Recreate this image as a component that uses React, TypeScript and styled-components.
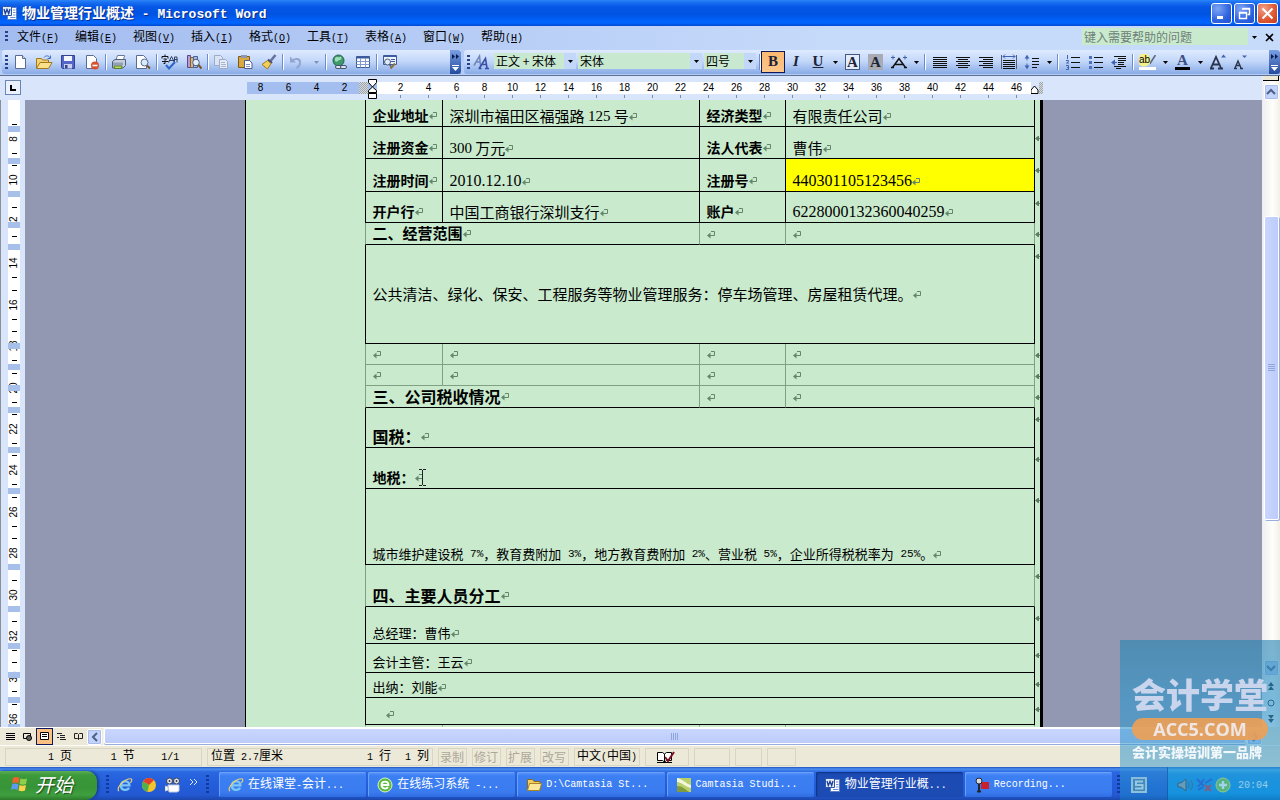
import React from "react";
import styled, { createGlobalStyle, css } from "styled-components";

const GlobalStyle = createGlobalStyle`
  *, *::before, *::after { box-sizing: border-box; }
  html, body { margin: 0; padding: 0; }
  body {
    background: #ece9d8;
    color: #000;
    font-family: "Noto Sans CJK SC", sans-serif;
    font-size: 12px;
    line-height: 16px;
    overflow: hidden;
  }
  button, input, select { font: inherit; color: inherit; margin: 0; padding: 0; border: 0; background: none; border-radius: 0; }
  svg { display: block; flex: none; }
`;

/* ---------- shared ---------- */

const Mono = styled.span<{ $size?: number }>`
  font-family: "Liberation Mono", monospace;
  font-size: ${(p) => p.$size ?? 10}px;
  white-space: pre;
`;

const Serif = styled.span<{ $size?: number }>`
  font-family: "Liberation Serif", serif;
  font-size: ${(p) => p.$size ?? 16}px;
`;

const Shell = styled.div`
  display: flex;
  flex-direction: column;
  height: 100vh;
  overflow: hidden;
`;

/* ---------- title bar ---------- */

const TitleBar = styled.header`
  display: flex;
  align-items: center;
  height: 26px;
  flex: none;
  padding: 0 2px;
  gap: 4px;
  background: linear-gradient(#2f86f8 0, #1a72f2 2px, #0556e4 7px, #0053e2 14px, #0062fb 21px, #0066ff 23px, #0048cf 26px);
  color: #fff;
`;

const TitleText = styled.h1`
  flex: 1;
  margin: 0;
  font-size: 14px;
  line-height: 24px;
  font-weight: 700;
  white-space: pre;
  text-shadow: 1px 1px 0 #0a2c86;
`;

const WindowButtons = styled.div`
  display: flex;
  gap: 2px;
`;

const WindowButton = styled.button<{ $danger?: boolean }>`
  display: grid;
  place-items: center;
  width: 21px;
  height: 21px;
  border: 1px solid #fff;
  border-radius: 3px;
  background: ${(p) =>
    p.$danger
      ? "radial-gradient(circle at 30% 25%, #f0a08a, #e05a35 55%, #c43a1c)"
      : "radial-gradient(circle at 30% 25%, #7ea6f4, #2f63e0 60%, #1e50d0)"};
`;

/* ---------- menu bar ---------- */

const MenuBar = styled.nav`
  display: flex;
  align-items: center;
  height: 24px;
  flex: none;
  padding: 0 2px 2px 5px;
  background: linear-gradient(90deg, #a3bcf0, #c6dafa 65%);
`;

const Grip = styled.span<{ $dark?: boolean; $h?: number }>`
  width: 3px;
  height: ${(p) => p.$h ?? 14}px;
  flex: none;
  background: repeating-linear-gradient(${(p) => (p.$dark ? "#123a9c" : "#27418a")} 0 2px, transparent 2px 4px);
`;

const MenuList = styled.ul`
  display: flex;
  flex: 1;
  list-style: none;
  margin: 0;
  padding: 0 0 0 1px;
`;

const MenuItem = styled.button`
  width: 58px;
  padding: 0 0 0 8px;
  text-align: left;
  line-height: 20px;
  white-space: nowrap;
`;

const HelpBox = styled.input`
  width: 166px;
  height: 17px;
  margin-bottom: 2px;
  padding: 0 2px;
  background: #c9eacc;
  &::placeholder { color: #6f7f7b; opacity: 1; }
`;

const PlainButton = styled.button<{ $w: number }>`
  display: grid;
  place-items: center;
  width: ${(p) => p.$w}px;
  height: 18px;
`;

/* ---------- toolbars ---------- */

const ToolbarRow = styled.div`
  display: flex;
  height: 26px;
  flex: none;
  padding: 0 0 1px 2px;
  gap: 3px;
  background: #b5cdf6;
  border-bottom: 1px solid #5d6f92;
`;

const Toolbar = styled.div<{ $grow?: boolean }>`
  display: flex;
  align-items: center;
  height: 24px;
  padding-left: 3px;
  border-radius: 3px 0 0 3px;
  background: linear-gradient(#dfeafe, #c4d8fa 45%, #88abe6);
  ${(p) => p.$grow && css`flex: 1;`}
`;

const ToolButton = styled.button<{ $w?: number; $active?: boolean }>`
  display: grid;
  place-items: center;
  width: ${(p) => p.$w ?? 24}px;
  height: 22px;
  flex: none;
  ${(p) =>
    p.$active &&
    css`
      border: 1px solid #10185c;
      background: linear-gradient(#fdb970, #fbc78b);
    `}
`;

const Separator = styled.span<{ $wide?: boolean }>`
  width: 1px;
  height: 16px;
  margin: ${(p) => (p.$wide ? "0 3px 0 2px" : "0 1px")};
  flex: none;
  background: #6c8ccb;
  box-shadow: 1px 0 0 #fff;
`;

const Overflow = styled.button`
  display: flex;
  flex-direction: column;
  align-items: center;
  justify-content: space-between;
  width: 11px;
  height: 24px;
  padding: 4px 0 3px;
  flex: none;
  border-radius: 0 3px 3px 0;
  background: linear-gradient(#7a9fe4, #234a9e);
`;

const ToolbarTail = styled.span<{ $w?: number }>`
  flex: ${(p) => (p.$w ? "none" : "1")};
  width: ${(p) => p.$w ?? 0}px;
`;

const Combo = styled.span<{ $w: number }>`
  display: flex;
  align-items: center;
  width: ${(p) => p.$w}px;
  height: 16px;
  margin: 0 2px 2px 0;
  flex: none;
  background: #c9e8d0;
`;

const ComboSelect = styled.select`
  appearance: none;
  flex: 1;
  min-width: 0;
  height: 16px;
  padding: 0 0 0 2px;
  line-height: 16px;
  outline: 0;
`;

const ComboArrow = styled.span`
  display: grid;
  place-items: center;
  width: 12px;
  height: 16px;
  background: #c3d7f8;
`;

/* ---------- workspace ---------- */

const Workspace = styled.div`
  display: flex;
  flex: 1;
  min-height: 0;
`;

const Editor = styled.div`
  display: flex;
  flex-direction: column;
  flex: 1;
  min-width: 0;
`;

const RulerRow = styled.div`
  display: flex;
  height: 24px;
  flex: none;
  background: #d8e5fa;
`;

const RulerCorner = styled.div`
  width: 25px;
  padding: 4px 0 0 5px;
  flex: none;
`;

const TabStop = styled.button`
  display: grid;
  place-items: center;
  width: 16px;
  height: 15px;
  border: 1px solid #6b84b4;
  background: #eaf2ff;
`;

const RulerCenter = styled.div`
  display: flex;
  flex: 1;
  min-width: 0;
  justify-content: center;
`;

const RulerTrack = styled.div`
  display: flex;
  width: 798px;
  flex: none;
  padding: 6px 0 0 2px;
`;

const RulerMargin = styled.div`
  display: flex;
  height: 12px;
  background: #a3beef;
`;

const RulerText = styled.div`
  display: flex;
  height: 12px;
  padding-left: 10px;
  background: #fff;
`;

const RulerMark = styled.span<{ $tick?: boolean }>`
  position: relative;
  width: 28px;
  text-align: center;
  font: 10px/12px "Liberation Sans", sans-serif;
  ${(p) =>
    p.$tick &&
    css`
      &::after { content: ""; position: absolute; left: 13px; top: 13px; width: 1px; height: 3px; background: #7d8ba6; }
    `}
`;

const Handle = styled.span`
  display: flex;
  justify-content: flex-end;
  width: 18px;
  svg { margin-top: -3px; z-index: 1; }
`;

const Dots = styled.span`
  width: 9px;
  height: 12px;
  background: repeating-conic-gradient(#9ea5ad 0 25%, #d6d9dc 0 50%) 0 0 / 2px 2px;
`;

const Body = styled.div`
  display: flex;
  flex: 1;
  min-height: 0;
`;

const SideRuler = styled.div`
  width: 25px;
  flex: none;
  padding: 0 5px 0 7px;
  border-left: 1px solid #8a8f99;
  background: #d8e5fa;
  overflow: hidden;
`;

const SideTrack = styled.div`
  position: relative;
  height: 100%;
  background: #fff;
`;

const SideNumbers = styled.div`
  position: absolute;
  inset: 0 0 auto 0;
  display: flex;
  flex-direction: column;
  justify-content: space-between;
  height: 634px;
  padding-top: 24px;
`;

const SideNumber = styled.span`
  display: flex;
  flex-direction: column;
  align-items: center;
  justify-content: space-between;
  height: 30px;
  width: 12px;
  font: 10px/12px "Liberation Sans", sans-serif;
  &::before, &::after { content: ""; width: 5px; height: 1px; background: #000; }
  b { font-weight: 400; transform: rotate(-90deg); }
`;

const SideRow = styled.div<{ $h: number }>`
  position: relative;
  height: ${(p) => p.$h}px;
  &::after { content: ""; display: block; position: absolute; inset: auto 0 0 0; height: 6px; background: #a6c0ea; }
`;

const SideRows = styled.div`
  padding-top: 5px;
`;

const Canvas = styled.main`
  flex: 1;
  min-width: 0;
  display: flex;
  justify-content: center;
  background: #9298b1;
  overflow: hidden;
`;

const Page = styled.article`
  width: 798px;
  flex: none;
  padding-left: 119px;
  border-left: 1px solid #000;
  border-right: 3px solid #000;
  background: #c9eacc;
`;

const DocTable = styled.table`
  border-collapse: separate;
  border-spacing: 0;
  table-layout: fixed;
  width: 675px;
`;

const Col = styled.col<{ $w: number }>`
  width: ${(p) => p.$w}px;
`;

type Tone = "dark" | "light" | "none";
const tone: Record<Tone, string> = { dark: "#000", light: "#7fa083", none: "transparent" };

const Cell = styled.td<{ $h: number; $side: Tone; $bottom: Tone; $first?: boolean; $mark?: boolean; $middle?: boolean }>`
  height: ${(p) => p.$h}px;
  padding: 0 0 0 7px;
  vertical-align: ${(p) => (p.$middle ? "middle" : "bottom")};
  border-right: 1px solid ${(p) => tone[p.$side]};
  border-bottom: 1px solid ${(p) => tone[p.$bottom]};
  ${(p) => p.$first && css`border-left: 1px solid ${tone[p.$side]};`}
  ${(p) => p.$mark && css`background: #ffff00;`}
  line-height: 0;
  white-space: nowrap;
`;

const EndCell = styled.td`
  padding: 8px 0 0 0;
  vertical-align: top;
  line-height: 0;
`;

const Line = styled.span<{ $size: number; $bold?: boolean; $indent?: boolean }>`
  display: inline-flex;
  align-items: center;
  height: 20px;
  padding-left: ${(p) => (p.$indent ? 13 : 0)}px;
  font-size: ${(p) => p.$size}px;
  line-height: 20px;
  font-weight: ${(p) => (p.$bold ? 700 : 400)};
  white-space: pre;
  padding-bottom: ${(p) => (p.$bold ? 2 : 0)}px;
`;

const Caret = styled.svg`
  margin-left: -6px;
`;

/* ---------- scroll bars ---------- */

const VScroll = styled.aside`
  display: flex;
  flex-direction: column;
  align-items: center;
  width: 18px;
  flex: none;
  background: linear-gradient(90deg, #eeeef0, #fefefb 60%, #f1efe6);
`;

const SplitHandle = styled.span`
  width: 16px;
  height: 5px;
  margin-bottom: 3px;
  flex: none;
  background: #ece9d8;
  border-bottom: 1px solid #000;
  border-right: 1px solid #000;
`;

const ScrollButton = styled.button`
  display: grid;
  place-items: center;
  width: 15px;
  height: 16px;
  flex: none;
  border: 1px solid #fff;
  border-radius: 2px;
  background: #c3d3fc;
  box-shadow: 0 0 0 1px #a9bdea inset;
`;

const VTrack = styled.div`
  display: flex;
  flex-direction: column;
  align-items: center;
  flex: 1;
  min-height: 0;
`;

const VSpace = styled.span<{ $n: number }>`
  flex: ${(p) => p.$n} 1 0;
`;

const VThumb = styled.div`
  display: grid;
  place-items: center;
  flex: 303 1 0;
  width: 15px;
  border: 1px solid #fff;
  border-radius: 2px;
  background: linear-gradient(90deg, #c9d7ff, #bccbf8);
  box-shadow: 1px 1px 0 #98aede;
`;

const Browse = styled.div`
  display: flex;
  flex-direction: column;
  align-items: center;
  justify-content: space-between;
  height: 51px;
  width: 18px;
  padding: 4px 0 2px;
  flex: none;
`;

const BottomFill = styled.span`
  width: 18px;
  height: 18px;
  background: #ece9d8;
  flex: none;
`;

const HScroll = styled.div`
  display: flex;
  align-items: center;
  height: 18px;
  flex: none;
  padding-left: 2px;
  background: #ece9d8;
  border-top: 1px solid #fff;
`;

const ViewButton = styled.button<{ $active?: boolean }>`
  display: grid;
  place-items: center;
  width: 17px;
  height: 17px;
  ${(p) =>
    p.$active &&
    css`
      border: 1px solid #10185c;
      background: #fdc083;
    `}
`;

const HTrack = styled.div`
  display: flex;
  flex: 1;
  height: 17px;
  margin-left: 1px;
  background: #f5f4ef;
`;

const HThumb = styled.div`
  display: grid;
  place-items: center;
  flex: 1;
  height: 16px;
  margin: 0 1px;
  border: 1px solid #fff;
  border-radius: 2px;
  background: linear-gradient(#c9d7ff, #bccbf8);
  box-shadow: 0 1px 0 #98aede;
`;

/* ---------- status bar ---------- */

const StatusBar = styled.footer`
  display: flex;
  align-items: center;
  height: 22px;
  flex: none;
  gap: 5px;
  padding-left: 5px;
  background: #ece9d8;
  border-top: 1px solid #fdfcf7;
`;

const StatusPanel = styled.span<{ $w: number; $muted?: boolean; $pad?: number }>`
  display: flex;
  justify-content: space-between;
  align-items: center;
  width: ${(p) => p.$w}px;
  height: 18px;
  padding: 0 ${(p) => p.$pad ?? 3}px;
  border: 1px solid #d9d5c3;
  color: ${(p) => (p.$muted ? "#aca899" : "#000")};
  white-space: pre;
`;

const StatusCell = styled.span<{ $w?: number; $left?: boolean }>`
  width: ${(p) => (p.$w ? `${p.$w}px` : "auto")};
  text-align: ${(p) => (p.$left ? "left" : "right")};
`;

/* ---------- task bar ---------- */

const TaskBar = styled.div`
  display: flex;
  height: 33px;
  flex: none;
  align-items: stretch;
  background: linear-gradient(#1f52c0 0, #4a8df0 2px, #2a67e0 5px, #245edb 16px, #2359d2 28px, #1c47ae 33px);
  color: #fff;
`;

const StartButton = styled.button`
  display: flex;
  align-items: center;
  gap: 5px;
  width: 97px;
  margin-top: 4px;
  padding: 0 0 4px 10px;
  border-radius: 0 10px 12px 0;
  background: linear-gradient(#5eac56 0, #3c9a3a 4px, #379337 16px, #3f9f3f 24px, #2c7a2c);
  box-shadow: 2px 0 3px #173f93;
  font-size: 19px;
  font-style: italic;
  text-shadow: 1px 1px 1px #1b4a1b;
`;

const QuickLaunch = styled.div`
  display: flex;
  align-items: center;
  gap: 8px;
  width: 122px;
  padding: 4px 0 2px 9px;
  color: #cfe0ff;
`;

const TaskList = styled.div`
  display: flex;
  flex: 1;
  min-width: 0;
  gap: 2px;
  padding: 5px 5px 3px 0;
`;

const Task = styled.button<{ $active?: boolean }>`
  display: flex;
  align-items: center;
  gap: 4px;
  flex: 1 1 0;
  max-width: 148px;
  min-width: 0;
  padding-left: 9px;
  border-radius: 2px;
  white-space: nowrap;
  overflow: hidden;
  background: ${(p) => (p.$active ? "#1c4bb4" : "linear-gradient(#5a96fb 0, #3c7ff2 4px, #3a7cf0 20px, #2f6ce0)")};
  box-shadow: ${(p) => (p.$active ? "inset 1px 1px 2px #0e2f80" : "inset 1px 1px 0 #6aa2fb")};
`;

const TrayLang = styled.div`
  display: flex;
  align-items: center;
  gap: 11px;
  width: 50px;
  padding-top: 2px;
`;

const Tray = styled.div`
  display: flex;
  align-items: center;
  gap: 2px;
  width: 113px;
  padding: 2px 0 0 10px;
  background: linear-gradient(#1c6fd8 0, #3fb0f5 3px, #1590ea 7px, #1291ec 26px, #0d6fc4);
  box-shadow: inset 1px 0 0 #0c3fa0;
  color: #e6f3ff;
`;

const Clock = styled.time`
  margin-left: 5px;
`;

/* ---------- watermark ---------- */

const Watermark = styled.div`
  position: fixed;
  right: 0;
  bottom: 0;
  width: 160px;
  height: 160px;
  padding: 32px 0 0 12px;
  background: linear-gradient(rgba(40, 132, 178, 0.62), rgba(55, 152, 205, 0.66) 40%, rgba(50, 150, 205, 0.5) 80%, rgba(20, 150, 200, 0.35));
  pointer-events: none;
  white-space: nowrap;
`;

const WatermarkName = styled.div`
  height: 46px;
  font-size: 34px;
  line-height: 44px;
  font-weight: 900;
  color: #c9d5ec;
`;

const WatermarkSite = styled.div`
  width: 136px;
  height: 22px;
  border-radius: 11px;
  background: rgba(238, 160, 84, 0.9);
  text-align: center;
  color: #efe6e4;
  font: 700 18px/23px "Open Sans", sans-serif;
`;

const WatermarkSlogan = styled.div`
  margin-top: 3px;
  font-size: 13px;
  line-height: 18px;
  font-weight: 900;
  color: #f2f7fb;
`;

/* ---------- icons ---------- */

const Icon = ({ children, w = 16, h = 16, box }: { children: React.ReactNode; w?: number; h?: number; box?: string }) => (
  <svg width={w} height={h} viewBox={box ?? `0 0 ${w} ${h}`} aria-hidden="true" fill="none">
    {children}
  </svg>
);

const Down = ({ c = "#000" }: { c?: string }) => (
  <Icon w={5} h={3}>
    <path d="M0 0h5L2.500 3z" fill={c} />
  </Icon>
);

const ParaMark = () => (
  <Icon w={9} h={9}>
    <path d="M4 1.500h3.500v4H2" stroke="#64866a" />
    <path d="M0 5.500L3.500 2.500v6z" fill="#64866a" />
  </Icon>
);

const RowMark = () => (
  <Icon w={5} h={7}>
    <path d="M0 3.500L3 1v5z" fill="#5d7a62" />
    <path d="M3.500 1v5M2 3.500h3" stroke="#5d7a62" />
  </Icon>
);

const WordIcon = () => (
  <Icon>
    <path d="M5.500 2.500h9v12h-9z" fill="#fff" stroke="#5b7fc4" />
    <path d="M11 5h2.500M11 7.500h2.500M11 10h2.500M8 12.500h5.500" stroke="#6f8fd0" />
    <path d="M.5 1.500h9v9h-9z" fill="#e4ecfb" stroke="#2c56a8" />
    <path d="M2 4l1.300 4.500L5 4.500l1.700 4L8 4" stroke="#1b3f94" strokeWidth="1.300" />
  </Icon>
);

const Doc = ({ x = 2 }: { x?: number }) => (
  <path d={`M${x}.5 1.500h7l3 3v10h-10z`} fill="#fff" stroke="#5a6b94" />
);

const icons: Record<string, React.ReactNode> = {
  new: (
    <Icon>
      <Doc x={3} />
      <path d="M10.500 1.500v3h3" stroke="#5a6b94" fill="#cddcf5" />
    </Icon>
  ),
  open: (
    <Icon w={18}>
      <path d="M1.500 14V4.500h5l1 1.500h6v3" fill="#f6d273" stroke="#a0781e" />
      <path d="M1.500 14.500L5 8.500h12l-3.500 6z" fill="#fbe08a" stroke="#a0781e" />
      <path d="M9 3.500c2-2.500 5-2 6 .5M15.500 1.500V4.500h-3" stroke="#3f6fc0" />
    </Icon>
  ),
  save: (
    <Icon>
      <path d="M1.500 1.500h13v13h-12l-1-1z" fill="#5566c8" stroke="#33418f" />
      <path d="M4 2h8v5H4z" fill="#f3f5ff" />
      <path d="M4 10h8v4.500H4z" fill="#c9d0ee" />
      <path d="M5 11h2.500v3.500H5z" fill="#33418f" />
    </Icon>
  ),
  perm: (
    <Icon>
      <Doc />
      <circle cx="11" cy="11.500" r="4" fill="#d8502e" />
      <path d="M8.500 11.500h5" stroke="#fff" strokeWidth="1.600" />
    </Icon>
  ),
  print: (
    <Icon>
      <path d="M5 6L6.500 1.500h7L12.500 6" fill="#fff" stroke="#68789c" />
      <path d="M1.500 7.500L4 5.500h10.500v6l-2.500 2.500H1.500z" fill="#c8cfdc" stroke="#4e5f80" />
      <path d="M2 8.500h10v3H2z" fill="#8fa0b8" />
      <path d="M3 12h8l-.5 2.500h-7z" fill="#b6e05a" stroke="#5c7b2c" />
    </Icon>
  ),
  preview: (
    <Icon>
      <Doc x={1} />
      <circle cx="9.500" cy="8.500" r="3.500" fill="#d6ecfb" stroke="#5a6b94" />
      <path d="M12 11.500l3 3" stroke="#7a5222" strokeWidth="2" />
    </Icon>
  ),
  spell: (
    <Icon w={18}>
      <path d="M1 2.500h6M1 2.500v2M7 2.500v2M4 .5v2M2.500 5h3L4 6.500v3H2.500M1 7.500h6.500" stroke="#111" />
      <path d="M7.500 8.500L10.500 2.500l3 6M8.500 6.500h4M13.500 8.500V3h2.500v5.500M13.500 5.500h3" stroke="#2c3f66" />
      <path d="M5 11l3 3.500L14 8" stroke="#2f63c8" strokeWidth="2" />
    </Icon>
  ),
  research: (
    <Icon>
      <path d="M1.500 1.500h3v12h-3z" fill="#b99bd0" stroke="#5b4a86" />
      <path d="M4.500 3.500h3v10h-3z" fill="#d9b780" stroke="#7d6236" />
      <path d="M7.500 2.500h4v11h-4z" fill="#a8bfe8" stroke="#4a5f96" />
      <circle cx="10" cy="8.500" r="3.300" fill="#e2f0fb" stroke="#4d5c7d" />
      <path d="M12.500 11l3 3.500" stroke="#7a5222" strokeWidth="2" />
    </Icon>
  ),
  copy: (
    <Icon>
      <path d="M1.500 1.500h6l2 2v8h-8z" fill="#dbe4f4" stroke="#9fabc6" />
      <path d="M6.500 5.500h6l2 2v7h-8z" fill="#e6ecf7" stroke="#9fabc6" />
      <path d="M8 8.500h4M8 10.500h5M8 12.500h5" stroke="#a9b5cf" />
    </Icon>
  ),
  paste: (
    <Icon>
      <path d="M1.500 2.500h11v11h-11z" fill="#d9a840" stroke="#7d5a16" />
      <path d="M4 1h6v3H4z" fill="#8d97b0" />
      <path d="M7.500 6.500h5l2.500 2.500v5.500H7.500z" fill="#fff" stroke="#4b5d8c" />
      <path d="M9 10.500h4M9 12.500h4" stroke="#7f93c4" />
    </Icon>
  ),
  brush: (
    <Icon>
      <path d="M14.500 1L9.500 7" stroke="#6672a0" strokeWidth="2.600" />
      <path d="M7 5.500l4 3.500" stroke="#434c70" strokeWidth="2" />
      <path d="M1 10.500l5.500-4L10 9.500 6.500 15z" fill="#f2cf58" stroke="#a07c22" />
    </Icon>
  ),
  undo: (
    <Icon>
      <path d="M3 7.500c4-4 9.500-3 9 1.500 0 2-1.500 4-3.500 5" stroke="#93a6cf" strokeWidth="2" />
      <path d="M2 2.500v6h6z" fill="#93a6cf" />
    </Icon>
  ),
  link: (
    <Icon>
      <circle cx="7.500" cy="6.500" r="5.500" fill="#3f9a6a" stroke="#1f5f50" />
      <path d="M4 4c2-2 3 0 5-1s2 3 0 3-3 3-5 1z" fill="#9fdcb8" />
      <rect x="4.500" y="11.500" width="6" height="3" rx="1.500" stroke="#45516e" fill="#dfe6f3" />
      <rect x="9.500" y="11.500" width="6" height="3" rx="1.500" stroke="#45516e" fill="#dfe6f3" />
    </Icon>
  ),
  table: (
    <Icon>
      <path d="M1.500 2.500h13v11h-13z" fill="#fff" stroke="#3c5a9c" />
      <path d="M1.500 3.500h13" stroke="#3c5a9c" strokeWidth="2" />
      <path d="M1.500 7.500h13M1.500 10.500h13M5.500 4v9.500M10.500 4v9.500" stroke="#7f9bd0" />
    </Icon>
  ),
  read: (
    <Icon>
      <path d="M1.500 1.500h13v9h-13z" fill="#eef4fd" stroke="#3c5a9c" />
      <path d="M1.500 2.500h13" stroke="#3c5a9c" />
      <path d="M9 5.500h4M9 7.500h4" stroke="#3c5a9c" />
      <path d="M8.500 14.500l4.500-5" stroke="#8a7440" strokeWidth="2" />
      <circle cx="5.500" cy="8" r="3" fill="#dcecfb" stroke="#4d5c7d" />
      <path d="M7.500 10.500l1.500 2" stroke="#4d5c7d" strokeWidth="1.400" />
    </Icon>
  ),
  styles: (
    <Icon w={18}>
      <path d="M1 11.500L6.500 2l1 9.500M3.500 8h4" stroke="#6f86b8" strokeWidth="1.500" />
      <path d="M6.500 14L12.500 4.500l1.500 9.500M9 10.500h5M5.500 14.500h3M12 14.500h4" stroke="#3a4ea8" strokeWidth="1.600" />
    </Icon>
  ),
  scale: (
    <Icon w={18}>
      <path d="M1 3.500h4M13 3.500h4M3 1.500v4M15 1.500v4" stroke="#3f63b0" />
      <path d="M2.500 13.500L9 4.500l6.500 9M5 10.500h8M1 13.500h3M14 13.500h3" stroke="#111" strokeWidth="1.500" />
    </Icon>
  ),
  justify: (
    <Icon>
      <path d="M1 3.500h14M1 5.500h14M1 7.500h14M1 9.500h14M1 11.500h14M1 13.500h14" stroke="#111" shapeRendering="crispEdges" />
    </Icon>
  ),
  center: (
    <Icon>
      <path d="M1 3.500h14M3 5.500h10M1 7.500h14M3 9.500h10M1 11.500h14M3 13.500h10" stroke="#111" shapeRendering="crispEdges" />
    </Icon>
  ),
  right: (
    <Icon>
      <path d="M1 3.500h14M5 5.500h10M1 7.500h14M5 9.500h10M1 11.500h14M5 13.500h10" stroke="#111" shapeRendering="crispEdges" />
    </Icon>
  ),
  spread: (
    <Icon>
      <path d="M.5 1v14M15.500 1v14" stroke="#555f78" />
      <path d="M2 2.500h12M4 .5l-2 2 2 2M12 .5l2 2-2 2" stroke="#3f63b0" />
      <path d="M2 6.500h12M2 8.500h12M2 10.500h12M2 12.500h12M2 14.500h12" stroke="#111" shapeRendering="crispEdges" />
    </Icon>
  ),
  spacing: (
    <Icon>
      <path d="M3 1.500v13" stroke="#3f63b0" strokeDasharray="5 3" />
      <path d="M.5 4.500L3 1l2.500 3.500zM.5 11.500L3 15l2.500-3.500z" fill="#3f63b0" />
      <path d="M8 4.500h7M8 7.500h7M8 10.500h7M8 13.500h5" stroke="#111" shapeRendering="crispEdges" />
    </Icon>
  ),
  numbers: (
    <Icon>
      <path d="M2.500 1v4M1 6.500h2.500v1L1.500 9h2.500M1 11.500h2.500v4H1M2 13.500h1" stroke="#3f63b0" />
      <path d="M6 3.500h9M6 8.500h9M6 13.500h9" stroke="#111" shapeRendering="crispEdges" />
    </Icon>
  ),
  bullets: (
    <Icon>
      <path d="M1 2h3v3H1zM1 7h3v3H1zM1 12h3v3H1z" fill="#4f70bc" />
      <path d="M6 3.500h9M6 8.500h9M6 13.500h9" stroke="#111" shapeRendering="crispEdges" />
    </Icon>
  ),
  indent: (
    <Icon>
      <path d="M0 8.500L4 5.500v6z" fill="#3f63b0" />
      <path d="M3 8.500h3" stroke="#3f63b0" />
      <path d="M3 2.500h12M7 4.500h8M7 6.500h8M7 8.500h6M7 10.500h6M3 12.500h12M5 14.500h5" stroke="#111" shapeRendering="crispEdges" />
    </Icon>
  ),
};

const LetterIcon = styled.span<{ $box?: "frame" | "shade"; $italic?: boolean; $underline?: boolean; $bar?: string }>`
  display: block;
  min-width: 15px;
  height: 16px;
  padding: 0 1px;
  text-align: center;
  font: 700 15px/15px "Liberation Serif", serif;
  color: #1c2436;
  ${(p) => p.$box === "frame" && css`border: 1px solid #45567f; background: #e3ecfc; line-height: 14px;`}
  ${(p) => p.$box === "shade" && css`background: #a9abb4; line-height: 16px;`}
  ${(p) => p.$italic && css`font-style: italic;`}
  ${(p) => p.$underline && css`text-decoration: underline;`}
  ${(p) => p.$bar && css`border-bottom: 3px solid ${p.$bar}; line-height: 13px; color: #3b4f86;`}
`;

const HighlightGlyph = styled.span`
  display: flex;
  align-items: center;
  width: 17px;
  height: 16px;
  padding-bottom: 2px;
  border-bottom: 3px solid #fff;
  font: 10px/12px "Liberation Sans", sans-serif;
  background: radial-gradient(circle at 5px 6px, #f4f08a 0 6px, transparent 7px);
`;

const IeIcon = () => (
  <Icon box="0 0 18 18">
    <path d="M4.500 9.500h9.500c0-6-9.500-6.500-9.500.5 0 5.500 7.500 5.500 9 2" stroke="#7cc6f8" strokeWidth="2.600" />
    <path d="M2 16C-1 12 8 2 15.500 2c2 0 1 3-.5 4.500" stroke="#e8d070" strokeWidth="1.300" />
  </Icon>
);
const GreenE = () => (
  <Icon>
    <circle cx="8" cy="8" r="7" fill="#5cbb3c" stroke="#d9f2cc" />
    <path d="M4.500 8h7c0-4.500-7-4.500-7 0 0 4 5 4.500 6.500 2" stroke="#fff" strokeWidth="1.800" />
  </Icon>
);
const FolderIcon = () => (
  <Icon>
    <path d="M1.500 13.500v-11h5l1.500 2h6v9z" fill="#f3cd62" stroke="#8a6a1c" />
    <path d="M1.500 13.500L3.500 6.500h12l-2 7z" fill="#fce79a" stroke="#a88428" />
  </Icon>
);
const CamIcon = () => (
  <Icon>
    <path d="M1 1h14v14H1z" fill="#b9cf6a" />
    <path d="M1 1c6 1 9 6 14 7v3C8 9 5 5 1 5z" fill="#f4f7df" />
    <path d="M1 9c5 0 8 3 12 6H1z" fill="#7f9a3c" />
  </Icon>
);
const RecIcon = () => (
  <Icon>
    <path d="M7 5h8v7H7z" fill="#c8202c" />
    <circle cx="5" cy="4" r="3" fill="#d8dbe2" stroke="#22262e" />
    <path d="M5 7v7M3 14.500h4" stroke="#22262e" strokeWidth="2" />
  </Icon>
);

/* ---------- data ---------- */

const menus: [string, string][] = [
  ["文件", "F"], ["编辑", "E"], ["视图", "V"], ["插入", "I"], ["格式", "O"],
  ["工具", "T"], ["表格", "A"], ["窗口", "W"], ["帮助", "H"],
];

const rowHeights = [27, 32, 33, 31, 22, 99, 21, 21, 22, 40, 41, 76, 42, 37, 29, 25, 27];
const sideNumbers = Array.from({ length: 15 }, (_, i) => 8 + i * 2);
const rulerNumbers = Array.from({ length: 23 }, (_, i) => 2 + i * 2);

const details: { h: number; label: string; value: React.ReactNode; label2: string; value2: React.ReactNode; mark?: boolean }[] = [
  { h: 27, label: "企业地址", value: <>深圳市福田区福强路 <Serif $size={15}>125</Serif> 号</>, label2: "经济类型", value2: "有限责任公司" },
  { h: 32, label: "注册资金", value: <><Serif $size={15}>300</Serif> 万元</>, label2: "法人代表", value2: "曹伟" },
  { h: 33, label: "注册时间", value: <Serif>2010.12.10</Serif>, label2: "注册号", value2: <Serif>440301105123456</Serif>, mark: true },
  { h: 31, label: "开户行", value: "中国工商银行深圳支行", label2: "账户", value2: <Serif>6228000132360040259</Serif> },
];

/* ---------- document ---------- */

const End = ({ show = true }: { show?: boolean }) => <EndCell>{show && <RowMark />}</EndCell>;

const Empty = () => (
  <Line $size={13}>
    <ParaMark />
  </Line>
);

type WideProps = { h: number; size: number; bold?: boolean; middle?: boolean; side?: Tone; indent?: boolean; children?: React.ReactNode };
const WideRow = ({ h, size, bold, middle, side = "dark", indent, children }: WideProps) => (
  <tr>
    <Cell colSpan={4} $h={h} $side={side} $bottom="dark" $first $middle={middle}>
      <Line $size={size} $bold={bold} $indent={indent}>
        {children}
        <ParaMark />
      </Line>
    </Cell>
    <End />
  </tr>
);

const HeadingRow = ({ size, children }: { size: number; children: string }) => (
  <tr>
    <Cell colSpan={2} $h={22} $side="light" $bottom="dark" $first>
      <Line $size={size} $bold>
        {children}
        <ParaMark />
      </Line>
    </Cell>
    <Cell $h={22} $side="light" $bottom="dark"><Empty /></Cell>
    <Cell $h={22} $side="light" $bottom="dark"><Empty /></Cell>
    <End />
  </tr>
);

const BlankRow = () => (
  <tr>
    {[0, 1, 2, 3].map((i) => (
      <Cell key={i} $h={21} $side="light" $bottom="light" $first={i === 0}>
        <Empty />
      </Cell>
    ))}
    <End />
  </tr>
);

const Document = () => (
  <DocTable>
    <colgroup>
      {[78, 257, 86, 249, 5].map((w) => <Col key={w} $w={w} />)}
    </colgroup>
    <tbody>
      {details.map((d, i) => (
        <tr key={d.label}>
          <Cell $h={d.h} $side="dark" $bottom="dark" $first>
            <Line $size={14} $bold>{d.label}<ParaMark /></Line>
          </Cell>
          <Cell $h={d.h} $side="dark" $bottom="dark">
            <Line $size={15}>{d.value}<ParaMark /></Line>
          </Cell>
          <Cell $h={d.h} $side="dark" $bottom="dark">
            <Line $size={14} $bold>{d.label2}<ParaMark /></Line>
          </Cell>
          <Cell $h={d.h} $side="dark" $bottom="dark" $mark={d.mark}>
            <Line $size={15}>{d.value2}<ParaMark /></Line>
          </Cell>
          <End show={i > 0} />
        </tr>
      ))}
      <HeadingRow size={15}>二、经营范围</HeadingRow>
      <WideRow h={99} size={15} middle>公共清洁、绿化、保安、工程服务等物业管理服务：停车场管理、房屋租赁代理。</WideRow>
      <BlankRow />
      <BlankRow />
      <HeadingRow size={16}>三、公司税收情况</HeadingRow>
      <WideRow h={40} size={16} bold>国税：</WideRow>
      <tr>
        <Cell colSpan={4} $h={41} $side="dark" $bottom="dark" $first>
          <Line $size={14} $bold>
            地税：
            <ParaMark />
            <Caret width="9" height="17" viewBox="0 0 9 17" aria-hidden="true" fill="none">
              <path d="M1 .5h3M5 .5h3M4.500 1v15M1 16.500h3M5 16.500h3" stroke="#222" />
            </Caret>
          </Line>
        </Cell>
        <End />
      </tr>
      <WideRow h={76} size={13}>
        城市维护建设税<Mono $size={11}> 7%</Mono>，教育费附加<Mono $size={11}> 3%</Mono>，地方教育费附加<Mono $size={11}> 2%</Mono>、营业税<Mono $size={11}> 5%</Mono>，企业所得税税率为<Mono $size={11}> 25%</Mono>。
      </WideRow>
      <WideRow h={42} size={16} bold side="light">四、主要人员分工</WideRow>
      <WideRow h={37} size={13}>总经理：曹伟</WideRow>
      <WideRow h={29} size={13}>会计主管：王云</WideRow>
      <WideRow h={25} size={13}>出纳：刘能</WideRow>
      <WideRow h={27} size={13} indent />
      <tr>
        {[0, 1, 2, 3].map((i) => (
          <Cell key={i} $h={2} $side="light" $bottom="none" $first={i === 0} />
        ))}
      </tr>
    </tbody>
  </DocTable>
);

/* ---------- bars ---------- */

const Tool = ({ n, w, label }: { n: string; w?: number; label: string }) => (
  <ToolButton $w={w} aria-label={label}>{icons[n]}</ToolButton>
);

const DropButton = ({ w = 12, c }: { w?: number; c?: string }) => (
  <ToolButton $w={w} aria-label="更多选项"><Down c={c} /></ToolButton>
);

const OverflowButton = () => (
  <Overflow aria-label="工具栏选项">
    <Icon w={8} h={5}>
      <path d="M0 0v5l3-2.500zM4 0v5l3-2.500z" fill="#0a1c4c" />
    </Icon>
    <Icon w={7} h={6}>
      <path d="M0 .5h7" stroke="#fff" />
      <path d="M0 2h7L3.500 6z" fill="#fff" />
    </Icon>
  </Overflow>
);

const ComboBox = ({ w, value, label }: { w: number; value: string; label: string }) => (
  <Combo $w={w}>
    <ComboSelect aria-label={label} defaultValue={value}>
      <option>{value}</option>
    </ComboSelect>
    <ComboArrow><Down /></ComboArrow>
  </Combo>
);

const Chevron = ({ d }: { d: string }) => (
  <Icon w={10} h={10}>
    <path d={d} stroke="#4d6185" strokeWidth="2" />
  </Icon>
);

export default function App() {
  return (
    <Shell>
      <GlobalStyle />
      <TitleBar>
        <WordIcon />
        <TitleText>物业管理行业概述<Mono $size={13}> - Microsoft Word</Mono></TitleText>
        <WindowButtons>
          <WindowButton aria-label="最小化">
            <Icon w={13} h={13}><path d="M2 9h6v3H2z" fill="#fff" /></Icon>
          </WindowButton>
          <WindowButton aria-label="还原">
            <Icon w={13} h={13}>
              <path d="M4.500 1.500h7v6h-2M4 2h8" stroke="#fff" strokeWidth="1.400" />
              <path d="M1.500 5.500h7v6h-7zM1 6h8" stroke="#fff" strokeWidth="1.400" />
            </Icon>
          </WindowButton>
          <WindowButton $danger aria-label="关闭">
            <Icon w={13} h={13}><path d="M1.500 1.500l10 10M11.500 1.500l-10 10" stroke="#fff" strokeWidth="2" /></Icon>
          </WindowButton>
        </WindowButtons>
      </TitleBar>

      <MenuBar>
        <Grip $h={12} />
        <MenuList>
          {menus.map(([name, key]) => (
            <li key={key}>
              <MenuItem>{name}<Mono>(<u>{key}</u>)</Mono></MenuItem>
            </li>
          ))}
        </MenuList>
        <HelpBox aria-label="帮助" placeholder="键入需要帮助的问题" />
        <PlainButton $w={12} aria-label="展开帮助"><Down /></PlainButton>
        <PlainButton $w={18} aria-label="关闭文档">
          <Icon w={9} h={9}><path d="M1 1l7 7M8 1L1 8" stroke="#000" strokeWidth="1.600" /></Icon>
        </PlainButton>
      </MenuBar>

      <ToolbarRow>
        <Toolbar>
          <Grip />
          <Tool n="new" label="新建" />
          <Tool n="open" label="打开" />
          <Tool n="save" label="保存" />
          <Tool n="perm" label="权限" />
          <Separator />
          <Tool n="print" label="打印" />
          <Tool n="preview" label="打印预览" />
          <Separator />
          <Tool n="spell" label="拼写和语法" />
          <Tool n="research" label="信息检索" />
          <Separator />
          <Tool n="copy" label="复制" />
          <Tool n="paste" label="粘贴" />
          <Tool n="brush" label="格式刷" />
          <Separator />
          <Tool n="undo" label="撤消" />
          <DropButton w={16} c="#7f93bd" />
          <Separator />
          <Tool n="link" label="超链接" />
          <Tool n="table" label="插入表格" />
          <Separator />
          <Tool n="read" label="阅读" />
          <ToolbarTail $w={48} />
          <OverflowButton />
        </Toolbar>
        <Toolbar $grow>
          <Grip />
          <Tool n="styles" label="格式窗格" />
          <ComboBox w={82} value="正文 + 宋体" label="样式" />
          <ComboBox w={124} value="宋体" label="字体" />
          <ComboBox w={52} value="四号" label="字号" />
          <Separator />
          <ToolButton $w={24} $active aria-label="加粗"><LetterIcon>B</LetterIcon></ToolButton>
          <ToolButton $w={22} aria-label="倾斜"><LetterIcon $italic>I</LetterIcon></ToolButton>
          <ToolButton $w={22} aria-label="下划线"><LetterIcon $underline>U</LetterIcon></ToolButton>
          <DropButton />
          <ToolButton $w={23} aria-label="字符边框"><LetterIcon $box="frame">A</LetterIcon></ToolButton>
          <ToolButton $w={23} aria-label="字符底纹"><LetterIcon $box="shade">A</LetterIcon></ToolButton>
          <Tool n="scale" w={23} label="字符缩放" />
          <DropButton />
          <Separator $wide />
          <Tool n="justify" w={23} label="两端对齐" />
          <Tool n="center" w={23} label="居中" />
          <Tool n="right" w={23} label="右对齐" />
          <Tool n="spread" w={23} label="分散对齐" />
          <Tool n="spacing" w={23} label="行距" />
          <DropButton />
          <Separator $wide />
          <Tool n="numbers" w={23} label="编号" />
          <Tool n="bullets" w={23} label="项目符号" />
          <Tool n="indent" w={23} label="减少缩进量" />
          <Separator $wide />
          <ToolButton $w={23} aria-label="突出显示">
            <HighlightGlyph>
              ab
              <Icon w={6} h={10}><path d="M5.500 0L1 7l-1 2" stroke="#5f6b80" strokeWidth="1.600" /></Icon>
            </HighlightGlyph>
          </ToolButton>
          <DropButton />
          <ToolButton $w={23} aria-label="字体颜色"><LetterIcon $bar="#000">A</LetterIcon></ToolButton>
          <DropButton />
          <ToolButton $w={23} aria-label="增大字体">
            <Icon><path d="M1 14L6 3l5 11M3 10.500h6M0 14.500h4M8 14.500h5" stroke="#2a344e" strokeWidth="1.800" /><path d="M11 3.500L13.500.500 16 3.500z" fill="#3f63b0" /></Icon>
          </ToolButton>
          <ToolButton $w={23} aria-label="缩小字体">
            <Icon><path d="M2 14l3-7 3 7M3.500 11.500h3M1 14.500h3M7 14.500h3" stroke="#2a344e" strokeWidth="1.400" /><path d="M9 1.500h5L11.500 4z" fill="#3f63b0" /></Icon>
          </ToolButton>
          <ToolbarTail />
          <OverflowButton />
        </Toolbar>
      </ToolbarRow>

      <Workspace>
        <Editor>
          <RulerRow>
            <RulerCorner>
              <TabStop aria-label="制表符">
                <Icon w={8} h={8}><path d="M2 1v5h5" stroke="#000" strokeWidth="2" /></Icon>
              </TabStop>
            </RulerCorner>
            <RulerCenter>
              <RulerTrack>
                <RulerMargin>
                  {[8, 6, 4, 2].map((n) => <RulerMark key={n}>{n}</RulerMark>)}
                  <Handle>
                    <Dots />
                    <Icon w={9} h={21}>
                      <path d="M.5.500h8v3l-4 4.500-4-4.500zM.5 13.500v-2L4.500 8l4 3.500v2zM.5 14.500h8v5h-8z" fill="#fff" stroke="#000" />
                    </Icon>
                  </Handle>
                </RulerMargin>
                <RulerText>
                  {rulerNumbers.map((n) => <RulerMark key={n} $tick>{n}</RulerMark>)}
                </RulerText>
                <Icon w={8} h={14}>
                  <path d="M0 8l3.500-4L7 8v3.500H0z" fill="#fff" stroke="#000" />
                </Icon>
                <Dots />
              </RulerTrack>
            </RulerCenter>
          </RulerRow>
          <Body>
            <SideRuler>
              <SideTrack>
                <SideNumbers>
                  {sideNumbers.map((n) => <SideNumber key={n}><b>{n}</b></SideNumber>)}
                </SideNumbers>
                <SideRows>
                  {rowHeights.map((h, i) => <SideRow key={i} $h={h} />)}
                </SideRows>
              </SideTrack>
            </SideRuler>
            <Canvas>
              <Page>
                <Document />
              </Page>
            </Canvas>
          </Body>
          <HScroll>
            <ViewButton aria-label="普通视图">
              <Icon w={9} h={9}><path d="M0 1.500h9M0 3.500h9M0 5.500h9M0 7.500h9" stroke="#000" shapeRendering="crispEdges" /></Icon>
            </ViewButton>
            <ViewButton aria-label="Web 版式视图">
              <Icon w={9} h={9}><path d="M.5 1.500h7v5h-7z" stroke="#000" /><circle cx="6" cy="6" r="2.500" fill="#666" stroke="#000" /></Icon>
            </ViewButton>
            <ViewButton $active aria-label="页面视图">
              <Icon w={9} h={9}><path d="M.5.500h8v7h-8z" fill="#fff" stroke="#000" /><path d="M2 2.500h5M2 4.500h5" stroke="#000" /></Icon>
            </ViewButton>
            <ViewButton aria-label="大纲视图">
              <Icon w={9} h={9}><path d="M0 1.500h5M3 3.500h5M0 5.500h2M3 5.500h5M3 7.500h6" stroke="#222" /></Icon>
            </ViewButton>
            <ViewButton aria-label="阅读版式">
              <Icon w={9} h={9}><path d="M.5 1.500h3l1 1 1-1h3v5h-3l-1 1-1-1h-3zM4.500 2.500v5" stroke="#222" /></Icon>
            </ViewButton>
            <ScrollButton aria-label="向左滚动"><Chevron d="M7 1L3 5l4 4" /></ScrollButton>
            <HTrack>
              <HThumb>
                <Icon w={8} h={7}><path d="M.5 0v7M2.500 0v7M4.500 0v7M6.500 0v7" stroke="#8fa5dc" /></Icon>
              </HThumb>
            </HTrack>
            <ScrollButton aria-label="向右滚动"><Chevron d="M3 1l4 4-4 4" /></ScrollButton>
          </HScroll>
        </Editor>
        <VScroll>
          <SplitHandle />
          <ScrollButton aria-label="向上滚动"><Chevron d="M1 7l4-4 4 4" /></ScrollButton>
          <VTrack>
            <VSpace $n={117} />
            <VThumb>
              <Icon w={7} h={8}><path d="M0 .5h7M0 2.500h7M0 4.500h7M0 6.500h7" stroke="#8fa5dc" /></Icon>
            </VThumb>
            <VSpace $n={141} />
          </VTrack>
          <ScrollButton aria-label="向下滚动"><Chevron d="M1 3l4 4 4-4" /></ScrollButton>
          <Browse>
            <Icon w={8} h={12}><path d="M1 6l3-4 3 4zM1 10l3-4 3 4z" fill="#111" /></Icon>
            <Icon w={8} h={8}><circle cx="4" cy="4" r="3" stroke="#111" /></Icon>
            <Icon w={8} h={12}><path d="M1 2l3 4 3-4zM1 6l3 4 3-4z" fill="#111" /></Icon>
          </Browse>
          <BottomFill />
        </VScroll>
      </Workspace>

      <StatusBar>
        <StatusPanel $w={197}>
          <StatusCell $w={63}><Mono>1 </Mono>页</StatusCell>
          <StatusCell $w={62}><Mono>1 </Mono>节</StatusCell>
          <StatusCell $w={44}><Mono>1/1</Mono></StatusCell>
          <StatusCell $w={18} />
        </StatusPanel>
        <StatusPanel $w={226}>
          <StatusCell $w={142} $left>位置<Mono> 2.7</Mono>厘米</StatusCell>
          <StatusCell><Mono>1 </Mono>行</StatusCell>
          <StatusCell><Mono>1 </Mono>列</StatusCell>
        </StatusPanel>
        {["录制", "修订", "扩展", "改写"].map((t) => (
          <StatusPanel key={t} $w={29} $muted $pad={1}>{t}</StatusPanel>
        ))}
        <StatusPanel $w={66} $pad={2}><span>中文<Mono>(</Mono>中国<Mono>)</Mono></span></StatusPanel>
        <StatusPanel $w={44} $pad={10}>
          <Icon w={19} h={14}>
            <path d="M1.500 2.500h5l2 1.500 2-1.500h5v8h-5l-2 1.500-2-1.500h-5zM8.500 4v8" fill="#fff" stroke="#000" />
            <path d="M1 12.500h15" stroke="#000" />
            <path d="M9 7l3 4 6-9" stroke="#7c1020" strokeWidth="2" />
          </Icon>
        </StatusPanel>
        <StatusPanel $w={36} />
        <StatusPanel $w={27} />
        <StatusPanel $w={29} />
      </StatusBar>

      <TaskBar>
        <StartButton>
          <Icon w={20} h={20}>
            <path d="M3 4c2-1.500 4-1.500 6.500 0L8.500 9.500C6 8 4 8 2 9.500z" fill="#f0622c" />
            <path d="M10.500 4.500c2.500 1 4 1 6.500 0L16 10c-2 1-4 1-6.500 0z" fill="#8fd04a" />
            <path d="M2 10.500c2-1.500 4-1.500 6.500 0L7.500 16C5 14.500 3 14.500 1 16z" fill="#5a9cf4" />
            <path d="M9.500 11c2.500 1 4 1 6.500 0l-1 5.500c-2 1-4 1-6.500 0z" fill="#fbd24a" />
          </Icon>
          开始
        </StartButton>
        <QuickLaunch>
          <Grip $dark $h={20} />
          <IeIcon />
          <Icon>
            <circle cx="8" cy="8" r="7" fill="#f3c52c" />
            <path d="M8 8L2 4.500A7 7 0 0 1 13 3z" fill="#e3402c" />
            <path d="M8 8L2 4.500a7 7 0 0 0 4.500 10.300z" fill="#4cb24c" />
          </Icon>
          <Icon>
            <circle cx="4.500" cy="4" r="3" fill="#dfe3ea" stroke="#3a4258" />
            <circle cx="11.500" cy="4" r="3" fill="#dfe3ea" stroke="#3a4258" />
            <path d="M4.500 3v2M3.500 4h2M11.500 3v2M10.500 4h2" stroke="#3a4258" />
            <path d="M0 9l3 1v3l-3 1zM3 8h11v6l-2 1H4z" fill="#fff" stroke="#c5ccda" />
          </Icon>
          <Icon w={9} h={14}><path d="M1 1l3 3-3 3M5 1l3 3-3 3" stroke="#dbe8ff" /></Icon>
          <Grip $dark $h={20} />
        </QuickLaunch>
        <TaskList>
          <Task><IeIcon /><span>在线课堂<Mono>-</Mono>会计<Mono>...</Mono></span></Task>
          <Task><GreenE /><span>在线练习系统<Mono> -...</Mono></span></Task>
          <Task><FolderIcon /><Mono>D:\Camtasia St...</Mono></Task>
          <Task><CamIcon /><Mono>Camtasia Studi...</Mono></Task>
          <Task $active><WordIcon /><span>物业管理行业概<Mono>...</Mono></span></Task>
          <Task><RecIcon /><Mono>Recording...</Mono></Task>
        </TaskList>
        <TrayLang>
          <Grip $dark $h={20} />
          <Icon>
            <path d="M1 1h14v14H1z" stroke="#d5dbe6" strokeWidth="2" fill="#5a7fb0" />
            <path d="M12 4.500H5v3.500h6.500v3.500H4" stroke="#e8ecf3" strokeWidth="2" />
          </Icon>
        </TrayLang>
        <Tray>
          <Icon w={17}>
            <path d="M1 6h3l5-4v12l-5-4H1z" fill="#98a2ae" stroke="#3c4654" />
            <path d="M11 5c1.500 2 1.500 4 0 6M13.500 3c2.500 3 2.500 7 0 10" stroke="#4a5a70" />
          </Icon>
          <Icon w={17}>
            <path d="M1 2l7 7M8 2L2 10M9 6l7-4M2 13l5-3" stroke="#2a50d8" strokeWidth="2" />
            <path d="M9 8l6 6M15 8l-6 6" stroke="#c43a50" strokeWidth="2" />
          </Icon>
          <Icon>
            <circle cx="8" cy="8" r="7" fill="#7cc94a" stroke="#d9e870" />
            <path d="M8 4v8M4 8h8" stroke="#fff" strokeWidth="2.400" />
          </Icon>
          <Clock><Mono>20:04</Mono></Clock>
        </Tray>
      </TaskBar>

      <Watermark>
        <WatermarkName>会计学堂</WatermarkName>
        <WatermarkSite>ACC5.COM</WatermarkSite>
        <WatermarkSlogan>会计实操培训第一品牌</WatermarkSlogan>
      </Watermark>
    </Shell>
  );
}
